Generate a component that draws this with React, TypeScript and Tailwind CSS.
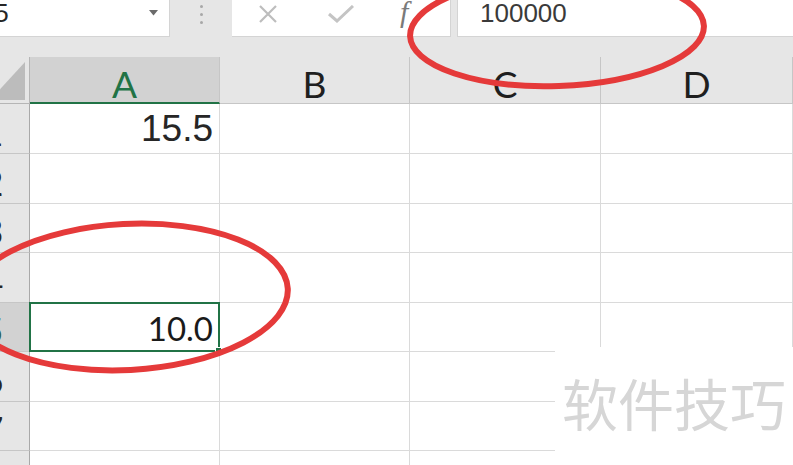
const COLS = [
  { key: 'A', w: 'w-[190px]' },
  { key: 'B', w: 'w-[190px]' },
  { key: 'C', w: 'w-[191px]' },
  { key: 'D', w: 'w-[192px]' },
];

const ROWS = [
  { n: 1, h: 'h-[50px]', a: '15.5' },
  { n: 2, h: 'h-[50px]', a: '' },
  { n: 3, h: 'h-[49px]', a: '' },
  { n: 4, h: 'h-[50px]', a: '' },
  { n: 5, h: 'h-[49px]', a: '10.0', selected: true },
  { n: 6, h: 'h-[50px]', a: '' },
  { n: 7, h: 'h-[49px]', a: '' },
  { n: 8, h: 'h-[50px]', a: '' },
];

function FormulaBar() {
  return (
    <div className="h-[57px] bg-[#e6e6e6]">
      <div className="flex h-[37px]">
        {/* name box */}
        <div className="relative flex w-[170px] items-center overflow-hidden border-r border-b border-[#d4d4d4] bg-white pb-[10px]">
          <span className="ml-[-23px] text-[26px] leading-none text-[#262626]">A5</span>
          <svg className="absolute left-[149px] top-[10px]" width="9" height="6" viewBox="0 0 9 6">
            <path d="M0 0h9L4.5 5.5z" fill="#6b6b6b" />
          </svg>
        </div>
        <div className="flex w-[62px] flex-col items-center justify-center gap-[5px] pb-[8px]">
          <span className="h-[3px] w-[3px] rounded-full bg-[#a8a8a8]" />
          <span className="h-[3px] w-[3px] rounded-full bg-[#a8a8a8]" />
          <span className="h-[3px] w-[3px] rounded-full bg-[#a8a8a8]" />
        </div>
        {/* cancel / enter / fx */}
        <div className="relative w-[219px] border-r border-b border-[#d4d4d4] bg-white">
          <svg className="absolute left-[26px] top-[5px]" width="20" height="18" viewBox="0 0 20 18">
            <path d="M2 1l16 16M18 1L2 17" stroke="#bdbdbd" strokeWidth="2.2" />
          </svg>
          <svg className="absolute left-[96px] top-[5px]" width="26" height="18" viewBox="0 0 26 18">
            <path d="M1 9l8 7L25 1" stroke="#c4c4c4" strokeWidth="3" fill="none" />
          </svg>
          <span className="absolute left-[168px] top-[-3px] font-['Liberation_Serif'] text-[30px] italic leading-none text-[#7a7a7a]">
            f
          </span>
        </div>
        <div className="w-[6px]" />
        <div className="flex flex-1 items-center border-b border-l border-[#d4d4d4] bg-white pb-[10px] pl-[22px]">
          <span className="text-[26px] leading-none text-[#3a3a3a]">100000</span>
        </div>
      </div>
    </div>
  );
}

function HeaderRow() {
  return (
    <div className="flex h-[47px] bg-[#e6e6e6]">
      <div className="relative w-[30px] border-r border-b border-[#b5b5b5]">
        <svg className="absolute left-0 top-[5px]" width="26" height="38" viewBox="0 0 26 38">
          <path d="M25 0V38H-10z" fill="#bcbcbc" />
        </svg>
      </div>
      {COLS.map((c) =>
        c.key === 'A' ? (
          <div
            key={c.key}
            className={`${c.w} flex items-center justify-center border-r border-b-[2px] border-r-[#c6c6c6] border-b-[#217346] bg-[#d2d2d2] pt-[7px] font-['Lato'] text-[37px] leading-none text-[#217346]`}
          >
            {c.key}
          </div>
        ) : (
          <div
            key={c.key}
            className={`${c.w} flex items-center justify-center border-r border-b border-[#c6c6c6] pt-[7px] font-['Lato'] text-[37px] leading-none text-[#1f1f1f]`}
          >
            {c.key}
          </div>
        ),
      )}
    </div>
  );
}

export default function App() {
  return (
    <div className="relative h-[465px] w-[793px] overflow-hidden bg-white font-['Liberation_Sans',sans-serif]">
      <FormulaBar />
      <HeaderRow />
      {ROWS.map((r) => (
        <div key={r.n} className={`flex ${r.h}`}>
          <div
            className={`flex w-[30px] items-center overflow-hidden border-r border-b border-r-[#a9a9a9] border-b-[#c6c6c6] pt-[6px] ${
              r.selected ? 'bg-[#d2d2d2] text-[#2f5d43]' : 'bg-[#e6e6e6] text-[#262626]'
            }`}
          >
            <span className="ml-[-20px] w-[26px] shrink-0 text-center font-['Lato'] text-[36px] leading-none">{r.n}</span>
          </div>
          {COLS.map((c) => (
            <div key={c.key} className={`relative ${c.w} border-r border-b border-[#dadada]`}>
              {c.key === 'A' && r.a && !r.selected && (
                <div className="flex h-full items-center justify-end pr-[6px] text-[37px] leading-none text-[#262626]">
                  {r.a}
                </div>
              )}
              {c.key === 'A' && r.selected && (
                <>
                  <div className="absolute inset-[-1px] border-2 border-[#217346]" />
                  <div className="absolute right-[-3px] bottom-[-3px] h-[7px] w-[7px] border border-white bg-[#217346]" />
                  <div className="flex h-full items-center justify-end pr-[6px] pt-[2px] font-['Lato'] text-[33px] leading-none text-[#1a1a1a]">
                    {r.a}
                  </div>
                </>
              )}
            </div>
          ))}
        </div>
      ))}

      {/* red annotations */}
      <svg className="pointer-events-none absolute inset-0" width="793" height="465" viewBox="0 0 793 465">
        <ellipse cx="557" cy="31" rx="147" ry="55" fill="none" stroke="#e53a3a" strokeWidth="6" transform="rotate(-2 557 31)" />
        <ellipse cx="127" cy="297" rx="161" ry="73" fill="none" stroke="#e53a3a" strokeWidth="6" transform="rotate(-3 127 297)" />
      </svg>

      {/* watermark */}
      <div className="absolute top-[347px] left-[555px] right-0 bottom-0 bg-white pl-[7px] pt-[27px]">
        <span className="font-['Noto_Sans_CJK_SC',sans-serif] text-[56px] leading-none text-[#d6d6d6]">软件技巧</span>
      </div>
    </div>
  );
}
